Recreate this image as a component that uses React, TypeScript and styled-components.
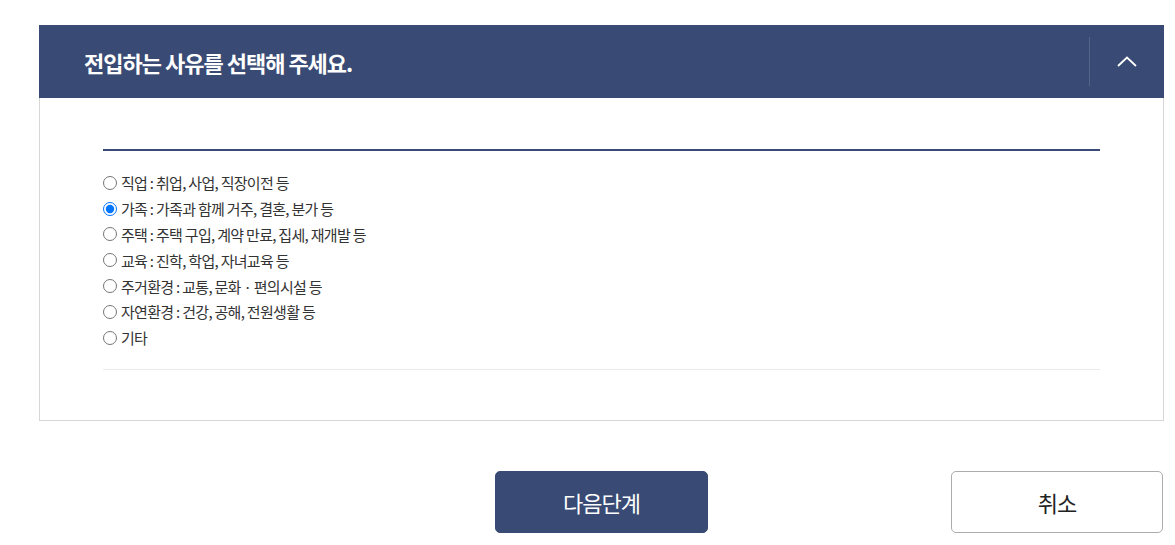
import { useState } from "react";
import styled, { createGlobalStyle } from "styled-components";

const GlobalStyle = createGlobalStyle`
  body {
    margin: 0;
    background: #fff;
    font-family: "Noto Sans CJK KR", "Noto Sans", sans-serif;
  }
`;

const Page = styled.div`
  width: 1125px;
  padding: 25px 0 0 39px;
`;

const Panel = styled.section`
  border: 1px solid #d6d6d6;
  border-top: none;
`;

const Header = styled.div`
  display: flex;
  align-items: center;
  height: 73px;
  margin: 0 -1px;
  background-color: #394b74;
`;

const Title = styled.h2`
  flex: 1;
  margin: 0;
  padding-left: 45px;
  color: #fff;
  font-size: 22px;
  font-weight: 700;
  letter-spacing: -1px;
`;

const ToggleBtn = styled.button`
  display: flex;
  align-items: center;
  justify-content: center;
  width: 75px;
  height: 49px;
  padding: 0;
  border: none;
  border-left: 1px solid rgba(255, 255, 255, 0.14);
  background: transparent;
  cursor: pointer;
`;

const Body = styled.div`
  padding: 51px 63px 50px;
`;

const List = styled.ul`
  margin: 0;
  padding: 19px 0 18px;
  list-style: none;
  border-top: 2px solid #394b74;
  border-bottom: 1px solid #ececec;
`;

const Item = styled.li`
  display: flex;
  align-items: center;
  height: 25.8px;
`;

const Label = styled.label`
  display: flex;
  align-items: center;
  color: #333;
  font-size: 15px;
  letter-spacing: -0.7px;
  cursor: pointer;

  input {
    width: 14px;
    height: 14px;
    margin: 0 4px 0 0;
  }
`;

const Actions = styled.div`
  display: grid;
  grid-template-columns: 1fr auto 1fr;
  margin-top: 50px;
`;

const Button = styled.button<{ $primary?: boolean }>`
  width: 213px;
  height: 62px;
  border-radius: 5px;
  font-family: "Noto Sans CJK KR", sans-serif;
  font-size: 22px;
  font-weight: 400;
  letter-spacing: -1px;
  cursor: pointer;
  border: 1px solid ${(p) => (p.$primary ? "#394b74" : "#acacac")};
  background-color: ${(p) => (p.$primary ? "#394b74" : "#fff")};
  color: ${(p) => (p.$primary ? "#fff" : "#222")};
`;

const CancelButton = styled(Button)`
  grid-column: 3;
  justify-self: end;
  width: 212px;
  margin-right: 1px;
`;

const NextButton = styled(Button)`
  grid-column: 2;
`;

const reasons = [
  "직업 : 취업, 사업, 직장이전 등",
  "가족 : 가족과 함께 거주, 결혼, 분가 등",
  "주택 : 주택 구입, 계약 만료, 집세, 재개발 등",
  "교육 : 진학, 학업, 자녀교육 등",
  "주거환경 : 교통, 문화 · 편의시설 등",
  "자연환경 : 건강, 공해, 전원생활 등",
  "기타",
];

export default function App() {
  const [selected, setSelected] = useState(1);
  const [open, setOpen] = useState(true);

  return (
    <Page>
      <GlobalStyle />
      <Panel>
        <Header>
          <Title>전입하는 사유를 선택해 주세요.</Title>
          <ToggleBtn onClick={() => setOpen(!open)} aria-label="접기">
            <svg width="20" height="11" viewBox="0 0 20 11">
              <path
                d={open ? "M1 10 L10 1.5 L19 10" : "M1 1 L10 9.5 L19 1"}
                fill="none"
                stroke="#fff"
                strokeWidth="1.8"
              />
            </svg>
          </ToggleBtn>
        </Header>
        {open && (
          <Body>
            <List>
              {reasons.map((text, i) => (
                <Item key={text}>
                  <Label>
                    <input
                      type="radio"
                      name="reason"
                      checked={selected === i}
                      onChange={() => setSelected(i)}
                    />
                    {text}
                  </Label>
                </Item>
              ))}
            </List>
          </Body>
        )}
      </Panel>
      <Actions>
        <NextButton $primary>다음단계</NextButton>
        <CancelButton>취소</CancelButton>
      </Actions>
    </Page>
  );
}
